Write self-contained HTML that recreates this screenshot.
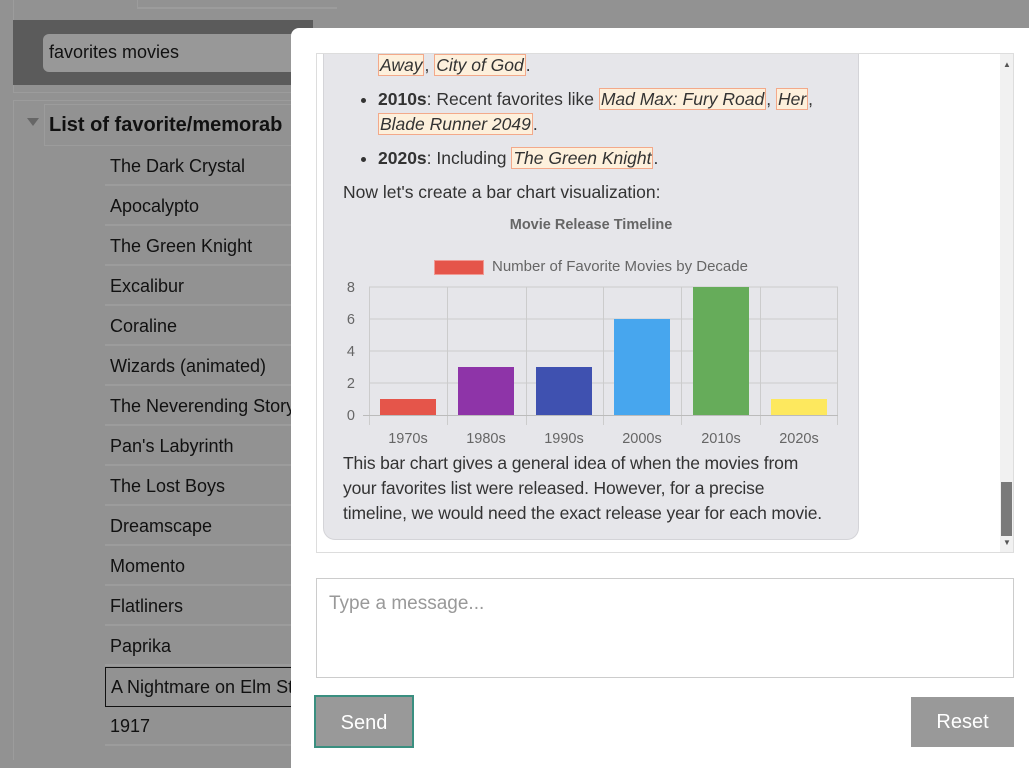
<!DOCTYPE html>
<html><head><style>
*{box-sizing:border-box;margin:0;padding:0}
body{width:1029px;height:757px;overflow:hidden;background:#929292;font-family:"Liberation Sans",sans-serif;position:relative}
.a{position:absolute}
.row{position:absolute;left:105px;width:200px;height:40px;border-bottom:2px solid #9c9c9c;font-size:18px;color:#111;padding:10px 0 0 5px;white-space:nowrap;overflow:hidden}
.chat{font-size:17.5px;color:#333;line-height:25px}
.m{font-style:italic;background:#fdf0dc;border:1px solid #f3a98a;padding:0 1px}
</style></head><body>
<div class="a" style="left:13px;top:0;width:300px;height:20px;border-left:1px solid #9c9c9c"></div>
<div class="a" style="left:137px;top:0;width:200px;height:9px;border-left:1px solid #9c9c9c;border-bottom:2px solid #9c9c9c"></div>
<div class="a" style="left:13px;top:20px;width:300px;height:65px;background:#5b5b5b"></div>
<div class="a" style="left:43px;top:34px;width:260px;height:38px;background:#989898;border-radius:6px;font-size:18px;color:#111;padding:8px 0 0 6px">favorites movies</div>
<div class="a" style="left:13px;top:85px;width:300px;height:8px;border:1px solid #9c9c9c;border-top:none"></div>
<div class="a" style="left:13px;top:100px;width:300px;height:660px;border-left:1px solid #9c9c9c;border-top:1px solid #9c9c9c"></div>
<div class="a" style="left:44px;top:104px;width:260px;height:42px;border:1px solid #9c9c9c;border-right:none"></div>
<div class="a" style="left:27px;top:118px;width:0;height:0;border-left:6px solid transparent;border-right:6px solid transparent;border-top:8px solid #666"></div>
<div class="a" style="left:49px;top:114px;font-size:20px;font-weight:bold;color:#111;white-space:nowrap">List of favorite/memorab</div>
<div class="row" style="top:146px">The Dark Crystal</div>
<div class="row" style="top:186px">Apocalypto</div>
<div class="row" style="top:226px">The Green Knight</div>
<div class="row" style="top:266px">Excalibur</div>
<div class="row" style="top:306px">Coraline</div>
<div class="row" style="top:346px">Wizards (animated)</div>
<div class="row" style="top:386px">The Neverending Story</div>
<div class="row" style="top:426px">Pan's Labyrinth</div>
<div class="row" style="top:466px">The Lost Boys</div>
<div class="row" style="top:506px">Dreamscape</div>
<div class="row" style="top:546px">Momento</div>
<div class="row" style="top:586px">Flatliners</div>
<div class="row" style="top:626px">Paprika</div>
<div class="row" style="top:667px;height:40px;border:1px solid #111;padding-top:9px">A Nightmare on Elm Street</div>
<div class="row" style="top:706px">1917</div>

<div class="a" style="left:291px;top:28px;width:740px;height:740px;background:#fff;border-radius:8px 0 0 0"></div>
<div class="a" style="left:316px;top:53px;width:698px;height:500px;border:1px solid #ddd;overflow:hidden">
 <div class="a" style="left:6px;top:-30px;width:536px;height:516px;background:#e6e6ea;border:1px solid #d4d4d8;border-radius:12px"></div>
 <div class="a chat" style="left:26px;top:-1px;width:500px">
  <div style="padding-left:35px"><span class="m">Away</span>, <span class="m">City of God</span>.</div>
  <ul style="padding-left:35px;margin-top:9px">
   <li><b>2010s</b>: Recent favorites like <span class="m">Mad Max: Fury Road</span>, <span class="m">Her</span>,<br><span class="m">Blade Runner 2049</span>.</li>
   <li style="margin-top:9px"><b>2020s</b>: Including <span class="m">The Green Knight</span>.</li>
  </ul>
  <div style="margin-top:9px">Now let's create a bar chart visualization:</div>
 </div>
 <div class="a" style="left:0;top:163px;width:548px;text-align:center;font-size:14.5px;font-weight:bold;color:#666">Movie Release Timeline</div>
 <div class="a" style="left:117px;top:206px;width:50px;height:15px;background:#e5554a;border:1px solid #f09a94"></div>
 <div class="a" style="left:175px;top:204px;font-size:15px;color:#666">Number of Favorite Movies by Decade</div>
 <svg class="a" style="left:0;top:220px" width="540" height="180">
  <g stroke="#ccc" stroke-width="1">
   <line x1="52" y1="13" x2="521" y2="13"/><line x1="52" y1="45" x2="521" y2="45"/><line x1="52" y1="77" x2="521" y2="77"/><line x1="52" y1="109" x2="521" y2="109"/>
   <line x1="52.5" y1="13" x2="52.5" y2="151"/><line x1="130.5" y1="13" x2="130.5" y2="151"/><line x1="209.5" y1="13" x2="209.5" y2="151"/><line x1="286.5" y1="13" x2="286.5" y2="151"/><line x1="364.5" y1="13" x2="364.5" y2="151"/><line x1="443.5" y1="13" x2="443.5" y2="151"/><line x1="520.5" y1="13" x2="520.5" y2="151"/>
  </g>
  <line x1="46" y1="141.5" x2="521" y2="141.5" stroke="#bbb"/>
  <rect x="63" y="125" width="56" height="16" fill="#e5554a"/>
  <rect x="141" y="93" width="56" height="48" fill="#8e34a8"/>
  <rect x="219" y="93" width="56" height="48" fill="#3f51b0"/>
  <rect x="297" y="45" width="56" height="96" fill="#47a6ee"/>
  <rect x="376" y="13" width="56" height="128" fill="#66ac5a"/>
  <rect x="454" y="125" width="56" height="16" fill="#fde85e"/>
  <g font-family="Liberation Sans" font-size="14.5" fill="#666" text-anchor="end">
   <text x="38" y="18">8</text><text x="38" y="50">6</text><text x="38" y="82">4</text><text x="38" y="114">2</text><text x="38" y="146">0</text>
  </g>
  <g font-family="Liberation Sans" font-size="14.5" fill="#666" text-anchor="middle">
   <text x="91" y="169">1970s</text><text x="169" y="169">1980s</text><text x="247" y="169">1990s</text><text x="325" y="169">2000s</text><text x="404" y="169">2010s</text><text x="482" y="169">2020s</text>
  </g>
 </svg>
 <div class="a chat" style="left:26px;top:397px;width:520px;white-space:nowrap;letter-spacing:-0.15px">This bar chart gives a general idea of when the movies from<br>your favorites list were released. However, for a precise<br>timeline, we would need the exact release year for each movie.</div>
 <div class="a" style="left:683px;top:0;width:14px;height:498px;background:#f1f1f1"></div>
 <div class="a" style="left:684px;top:428px;width:11px;height:54px;background:#7a7a7a"></div>
 <div class="a" style="left:686px;top:6px;font-size:8px;color:#555">▲</div>
 <div class="a" style="left:686px;top:484px;font-size:8px;color:#555">▼</div>
</div>
<div class="a" style="left:316px;top:578px;width:698px;height:100px;border:1px solid #ccc;font-size:19px;color:#999;padding:14px 12px">Type a message...</div>
<div class="a" style="left:314px;top:695px;width:100px;height:53px;background:#999;border:2px solid #3a8f80;color:#fff;font-size:20px;text-align:center;padding-top:15px">Send</div>
<div class="a" style="left:911px;top:697px;width:103px;height:50px;background:#999;color:#fff;font-size:20px;text-align:center;padding-top:14px">Reset</div>
</body></html>
